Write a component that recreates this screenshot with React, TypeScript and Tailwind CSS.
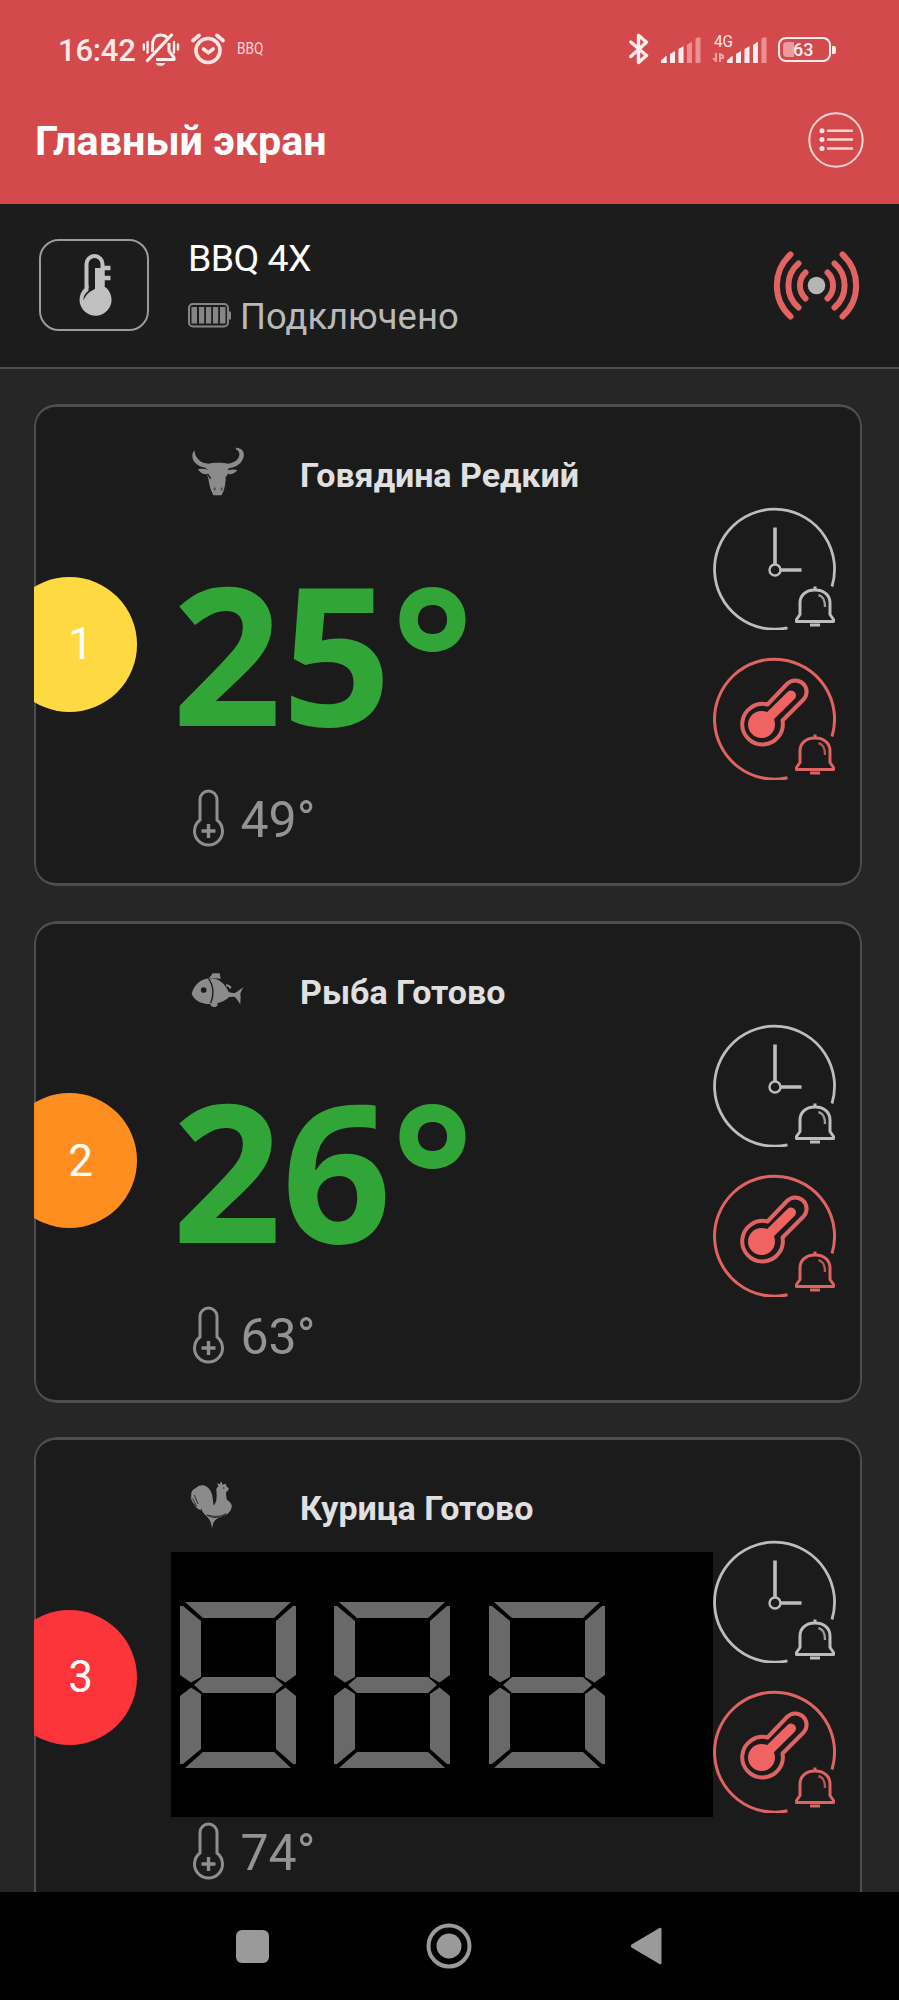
import type { ReactNode } from "react";

const roboto = "font-['Roboto','Liberation_Sans',sans-serif]";

function MutedBell() {
  return (
    <svg className="ml-[7px] mt-[33px] h-[33px] w-[38px] shrink-0" viewBox="0 0 38 33" fill="none">
      <path d="M1.8 11.5v5M5.6 9v10.5M32 9v10.5M36 11.5v5" stroke="#fff0ef" strokeWidth="2.4" strokeLinecap="round" />
      <path d="M10.500 19V12.500C10.500 6 13.500 2 18.500 2c3.500 0 5.800 1.300 7.300 3.500M27 10v8l5 6.500v2H14" stroke="#fff0ef" strokeWidth="3" strokeLinejoin="round" />
      <path d="M5.500 27.500L29.500 2" stroke="#fff0ef" strokeWidth="3.200" strokeLinecap="round" />
      <path d="M13.500 30h10c-1 2-2.800 2.800-5 2.800s-4-.8-5-2.800z" fill="#fff0ef" />
    </svg>
  );
}

function Alarm() {
  return (
    <svg className="ml-[11px] mt-[33px] h-[32px] w-[34px] shrink-0" viewBox="0 0 34 32" fill="none" stroke="#ffe6e5">
      <circle cx="17" cy="17.500" r="12" strokeWidth="3.600" />
      <path d="M12.500 16l4.700 3.700 5-3.700" strokeWidth="3.600" strokeLinecap="round" strokeLinejoin="round" />
      <path d="M2 7.500l6-5M26 2.500l6 5" strokeWidth="3.600" strokeLinecap="round" />
    </svg>
  );
}

function Bluetooth() {
  return (
    <svg className="mt-[33px] h-[32px] w-[20px] shrink-0" viewBox="0 0 20 32" fill="none">
      <path d="M1.800 9L17.500 22.500 9.500 29.500V2.200l8 7L1.800 23.500" stroke="#ffeeed" strokeWidth="3.400" strokeLinejoin="round" strokeLinecap="round" />
    </svg>
  );
}

function Signal({ level }: { level: number }) {
  return (
    <svg className="mt-[37px] h-[26px] w-[40px] shrink-0" viewBox="0 0 40 26">
      {[
        "M0 26v-2.500L5 19h.700v7z",
        "M9 26V17l5-3v12z",
        "M17.500 26V12l5-3v17z",
        "M26 26V8l5-3.500V26z",
        "M34.500 26V2l1.500-1.500h3.500V26z",
      ].map((d, i) => (
        <path key={i} d={d} fill={i < level ? "#ffeeed" : "#ed8f8f"} />
      ))}
    </svg>
  );
}

function StatusBar() {
  return (
    <div className="flex h-[78px] items-start text-[#ffe9e8]">
      <span className="ml-[58px] mt-[35px] w-[77px] whitespace-nowrap text-[31px] font-medium leading-none tracking-[-0.2px]">16:42</span>
      <MutedBell />
      <Alarm />
      <span className="ml-[12px] mt-[40px] w-[27px] origin-left scale-x-[0.8] whitespace-nowrap text-[17px] leading-none text-[#ffd8d7]">BBQ</span>
      <div className="ml-auto mr-[63px] flex items-start">
        <Bluetooth />
        <div className="ml-[12px] flex">
          <Signal level={3} />
        </div>
        <div className="ml-[13px] mt-[33px] flex w-[13px] flex-col">
          <span className="origin-left scale-x-[0.9] whitespace-nowrap text-[17px] leading-none">4G</span>
          <svg className="-ml-[2px] mt-[3px] h-[9px] w-[12px]" viewBox="0 0 12 9" fill="none" stroke="#f0a09f" strokeWidth="2">
            <path d="M1 5l3 3V0M8 9V1l3 1.500v2.500H8" />
          </svg>
        </div>
        <Signal level={4} />
        <div className="ml-[11px] mt-[37px] flex items-center">
          <div className="flex h-[25px] w-[53px] items-center rounded-[8px] border-[2.500px] border-[#ffeeed] p-[3px]">
            <div className="h-full w-[11px] rounded-l-[4px] bg-[#ef9999]" />
            <span className="-ml-px text-[18px] font-medium leading-none text-[#fff0ef]">63</span>
          </div>
          <div className="ml-[1px] h-[8px] w-[4px] rounded-r-[2px] bg-[#ffeeed]" />
        </div>
      </div>
    </div>
  );
}

function Header() {
  return (
    <header className="h-[204px] shrink-0 bg-[#d4494b]">
      <StatusBar />
      <div className="flex items-start justify-between pl-[34px] pr-[35px]">
        <h1 className="ml-px mt-[43px] whitespace-nowrap text-[41.300px] font-bold leading-none text-white">Главный экран</h1>
        <button className="mt-[33.500px] h-[56px] w-[56px]" aria-label="Меню">
          <svg viewBox="0 0 56 56" fill="none" stroke="#ffd5d4">
            <circle cx="28" cy="28" r="26.700" strokeWidth="2" />
            <path d="M20 18.800h24M20 27.500h24M20 36.500h24" strokeWidth="2.400" strokeLinecap="round" />
            <g fill="#ffe4e3" stroke="none">
              <circle cx="14" cy="18.800" r="2.500" />
              <circle cx="14" cy="27.500" r="2.500" />
              <circle cx="14" cy="36.500" r="2.500" />
            </g>
          </svg>
        </button>
      </div>
    </header>
  );
}

function DeviceRow() {
  return (
    <section className="flex h-[165px] shrink-0 items-start border-b-2 border-[#4d4d4d] bg-[#1c1c1c] pl-[39px] pr-[39px]">
      <div className="mt-[35px] flex h-[92px] w-[110px] items-start rounded-[20px] border-2 border-[#9b9b9b] pl-[37px] pt-[13px]">
        <svg className="h-[62px] w-[34px]" viewBox="0 0 34 62" fill="none">
          <path d="M8.500 34V10a8 8 0 0 1 16 0V32" stroke="#c0c0c0" strokeWidth="4" />
          <path d="M17 14h9.500v18.500a16 16 0 1 1-19.500 1.200l3.500-3v6c-4 3-5 6-5 9.500 4-8 6-8 11.500-11.500z" fill="#c0c0c0" />
          <path d="M24 14h8.500M24 24h8.500" stroke="#c0c0c0" strokeWidth="4.500" />
        </svg>
      </div>
      <div className="ml-[39px] flex flex-col items-start">
        <span className="mt-[36px] whitespace-nowrap text-[37.500px] leading-none tracking-[-0.600px] text-white">BBQ 4X</span>
        <div className="mt-[21.500px] flex items-start">
          <svg className="mt-[4px] h-[25px] w-[43px]" viewBox="0 0 43 25">
            <rect x="1" y="1" width="39" height="22.500" rx="4" fill="none" stroke="#858585" strokeWidth="2" />
            <path d="M41 8.500h2v8h-2z" fill="#858585" />
            <path d="M3.500 4h5.500v16.500H3.500zM11 4h5.200v16.500H11zM18 4h5.200v16.500H18zM25 4h5.200v16.500H25zM32 4h5.500v16.500H32z" fill="#858585" />
          </svg>
          <span className="ml-[9px] whitespace-nowrap text-[36.400px] leading-none text-[#b9b9b9]">Подключено</span>
        </div>
      </div>
      <svg className="ml-auto mt-[47px] h-[69px] w-[87px]" viewBox="-1 0 87 69" fill="none" stroke="#e36262" strokeWidth="6" strokeLinecap="round">
        <path d="M16.500 3.500A42 42 0 0 0 16.500 65.500M24.500 12.500A29 29 0 0 0 24.500 56.500M31.500 21.500A18 18 0 0 0 31.500 47.500" />
        <path d="M68.500 3.500A42 42 0 0 1 68.500 65.500M60.500 12.500A29 29 0 0 1 60.500 56.500M53.500 21.500A18 18 0 0 1 53.500 47.500" />
        <circle cx="42.500" cy="34.500" r="8.800" fill="#b5b5b5" stroke="none" />
      </svg>
    </section>
  );
}

function Bull() {
  return (
    <svg className="ml-[20px] mt-[43px] h-[50px] w-[54px]" viewBox="30 54 162 150">
      <path
        d="M40 64c-7 8-9 24 1 36 9 11 21 15 32 16l8 6c-8-2-18-4-30-1 5 9 14 15 26 15 5 8 6 18 8 30 2 11 5 19 9 26l3 7h24l4-7c4-8 7-20 8-31 1-9 3-18 8-25 12 1 22-4 28-13-8-3-18-2-30 1l6-7c14-2 28-7 36-19 12-16 11-38-12-42-4 0-6 3-4 5 10 5 13 16 7 26-6 10-16 15-32 17-8-3-44-4-56 0-13-1-23-4-31-12-9-8-11-17-13-28z"
        fill="#8b8b8b"
      />
      <path d="M80 136l8 11M143 136l-8 11" stroke="#282828" strokeWidth="5" strokeLinecap="round" />
      <ellipse cx="101" cy="180" rx="3" ry="5" fill="#4a4a4a" />
      <ellipse cx="122" cy="180" rx="3" ry="5" fill="#4a4a4a" />
    </svg>
  );
}

function Fish() {
  return (
    <svg className="ml-[20px] mt-[52px] h-[35px] w-[54px]" viewBox="61 68 162 105">
      <path d="M115 82l8-8 2-5h22l3 16z" fill="#8b8b8b" />
      <path d="M63 130c7-23 23-44 55-46 32-1 46 21 57 42l16 3c7-3 14-9 27-18-7 13-11 20-8 27l-1 23c-7-7-10-19-19-22l-15 1c-13 14-34 21-58 21-28 0-47-13-54-31z" fill="#8b8b8b" />
      <path d="M116 158l6 10 10 3 9-5-1-8z" fill="#8b8b8b" />
      <path d="M166 105c7 0 12 3 14 9" stroke="#8b8b8b" strokeWidth="6" fill="none" />
      <path d="M114 85c17 24 16 49 6 74" stroke="#1b1b1b" strokeWidth="4" fill="none" />
      <circle cx="99" cy="119" r="8.500" fill="#1b1b1b" />
    </svg>
  );
}

function Rooster() {
  return (
    <svg className="ml-[18px] mt-[43px] h-[50px] w-[54px]" viewBox="27 33 162 150">
      <path
        d="M62 124c-9-4-15-9-19-17l7 5c-10-8-18-19-18-32l8 17c-11-18-8-35 9-41C65 42 84 50 93 68c6 12 5 25 8 41 8-7 9-19 9-31l-1-17c1-5 4-7 6-9l-4-9 8 3 4-9 5 10 9-3 3 9 7 5-4 8-5 4c1 8 0 15 3 22 7 6 16 11 14 22-2 15-15 24-29 29-11 4-20 6-26 19l-4 16c-2-13-4-23-12-32-9-10-19-17-20-29z"
        fill="#8b8b8b"
      />
      <path d="M81 138c16 11 41 11 57-4-15 11-38 9-57 4zM38 88l12 25M43 78l11 27" stroke="#1b1b1b" strokeWidth="2.500" fill="none" />
      <circle cx="131" cy="57" r="2.500" fill="#303030" />
    </svg>
  );
}

function Bell() {
  return (
    <g strokeWidth="3">
      <path d="M87 107.500v-11.500c0-7 5-13 15-13s15 6 15 13v11.500l3.500 5v2H83.500v-2z" strokeLinejoin="round" />
      <path d="M102 79.500v3M97 118h10" />
      <path d="M105.500 88c5 1.500 6.500 5 6.500 12" strokeWidth="2.400" opacity="0.800" />
    </g>
  );
}

const RING = "M74.500 120.800A60 60 0 1 1 119 79.500";

function TimerIcon() {
  return (
    <svg className="h-[123px] w-[123px]" viewBox="0 0 123 123" fill="none" stroke="#bdbdbd">
      <path d={RING} strokeWidth="2.800" />
      <path d="M62 20.500v37M68 63h20.500" strokeWidth="3.600" />
      <circle cx="62" cy="63" r="5.500" strokeWidth="2.400" />
      <Bell />
    </svg>
  );
}

function ProbeAlarmIcon() {
  return (
    <svg className="mt-[27px] h-[123px] w-[123px]" viewBox="0 0 123 123" fill="none" stroke="#e06363">
      <path d={RING} strokeWidth="3" />
      <path d="M54.500 47.500L74 27a11.300 11.300 0 0 1 16.500 15.500L69.500 63.500A20.300 20.300 0 1 1 54.500 47.500z" strokeWidth="4" strokeLinejoin="round" />
      <circle cx="48.500" cy="67.500" r="13.500" fill="#ef6363" stroke="none" />
      <path d="M48.500 67.500L78 38.500" stroke="#ef6363" strokeWidth="10" strokeLinecap="round" />
      <g transform="translate(0 -2)">
        <Bell />
      </g>
    </svg>
  );
}

function TargetIcon() {
  return (
    <svg className="mt-[5px] h-[58px] w-[33px]" viewBox="0 0 33 58" fill="none" stroke="#8e8e8e">
      <path d="M8 31V10.500a8.500 8.500 0 0 1 17 0V31a14 14 0 1 1-17 0z" strokeWidth="3" />
      <path d="M16.500 35v14M9.500 42h14" strokeWidth="3.400" />
    </svg>
  );
}

function SegmentDisplay() {
  return (
    <div className="flex h-[265px] items-start gap-[38.500px] bg-black pl-[8.500px] pt-[50px]">
      {[0, 1, 2].map((i) => (
        <svg key={i} className="h-[166px] w-[116px]" viewBox="0 0 116 166" fill="#696969">
          <path d="M5 0h106L94 16H23z" />
          <path d="M0 4l3 0 18 15v56l-10 5.500L0 73z" />
          <path d="M116 4l-3 0-17 15v56l9.500 5.500L116 73z" />
          <path d="M14 83l9-8h71l9 8-9 8H23z" />
          <path d="M0 162l3 0 18-15V92l-10-6.500L0 94z" />
          <path d="M116 162l-3 0-17-15V92l9.500-6.500L116 94z" />
          <path d="M5 166h106L94 150H23z" />
        </svg>
      ))}
    </div>
  );
}

function Reading({ value }: { value: string }) {
  return (
    <div className="h-[265px]">
      <div className="ml-px whitespace-nowrap pt-[37px] font-['Noto_Sans','Open_Sans',sans-serif] text-[192px] font-bold leading-none text-[#31a537]">{value}</div>
    </div>
  );
}

type ProbeProps = {
  index: number;
  badge: string;
  icon: ReactNode;
  name: string;
  target: string;
  children: ReactNode;
};

function ProbeCard({ index, badge, icon, name, target, children }: ProbeProps) {
  return (
    <article className="relative flex h-[482px] w-[828px] shrink-0 overflow-hidden rounded-[22px] bg-[#1b1b1b]">
      <div className="pointer-events-none absolute inset-0 rounded-[22px] border-x-2 border-y-3 border-[#4d4d4d]" />
      <div className="relative flex w-[137px] shrink-0 items-center pb-[2px]">
        <div className={`-ml-[32px] flex h-[135px] w-[135px] shrink-0 items-center justify-center rounded-full pl-[22px] text-[44px] leading-none text-white ${badge}`}>
          {index}
        </div>
      </div>
      <div className="relative w-[542px] shrink-0">
        <div className="flex h-[115px] items-start">
          <div className="w-[129px]">{icon}</div>
          <h2 className="mt-[54px] whitespace-nowrap text-[34px] font-bold leading-none text-[#e0e0e0]">{name}</h2>
        </div>
        {children}
        <div className="flex items-start pl-[20.500px]">
          <TargetIcon />
          <span className="ml-[16px] mt-[11px] whitespace-nowrap text-[50px] leading-none text-[#939393]">{target}</span>
        </div>
      </div>
      <div className="relative flex flex-col pt-[103px]">
        <TimerIcon />
        <ProbeAlarmIcon />
      </div>
    </article>
  );
}

function NavBar() {
  return (
    <nav className="flex h-[108px] shrink-0 items-center bg-black pl-[236px]">
      <div className="h-[33px] w-[33px] rounded-[6px] bg-[#9a9a9a]" />
      <svg className="ml-[157px] h-[46px] w-[46px]" viewBox="0 0 46 46">
        <circle cx="23" cy="23" r="20.500" fill="none" stroke="#9a9a9a" strokeWidth="4" />
        <circle cx="23" cy="23" r="12.500" fill="#9a9a9a" />
      </svg>
      <svg className="ml-[158px] h-[38px] w-[32px]" viewBox="0 0 32 38">
        <path d="M1.500 17.500L29.500 1Q31.500 0 31.500 2V36Q31.500 38 29.500 37L1.500 20.500Q0 19 1.500 17.500z" fill="#9a9a9a" />
      </svg>
    </nav>
  );
}

export default function App() {
  return (
    <div className={`flex h-[2000px] w-[899px] flex-col overflow-hidden bg-[#262626] ${roboto}`}>
      <Header />
      <DeviceRow />
      <main className="flex min-h-0 flex-1 flex-col gap-[34.500px] overflow-hidden pl-[34px] pt-[35px]">
        <ProbeCard index={1} badge="bg-[#ffd942]" icon={<Bull />} name="Говядина Редкий" target="49°">
          <Reading value="25°" />
        </ProbeCard>
        <ProbeCard index={2} badge="bg-[#ff8e20]" icon={<Fish />} name="Рыба Готово" target="63°">
          <Reading value="26°" />
        </ProbeCard>
        <ProbeCard index={3} badge="bg-[#fb3539]" icon={<Rooster />} name="Курица Готово" target="74°">
          <SegmentDisplay />
        </ProbeCard>
      </main>
      <NavBar />
    </div>
  );
}
